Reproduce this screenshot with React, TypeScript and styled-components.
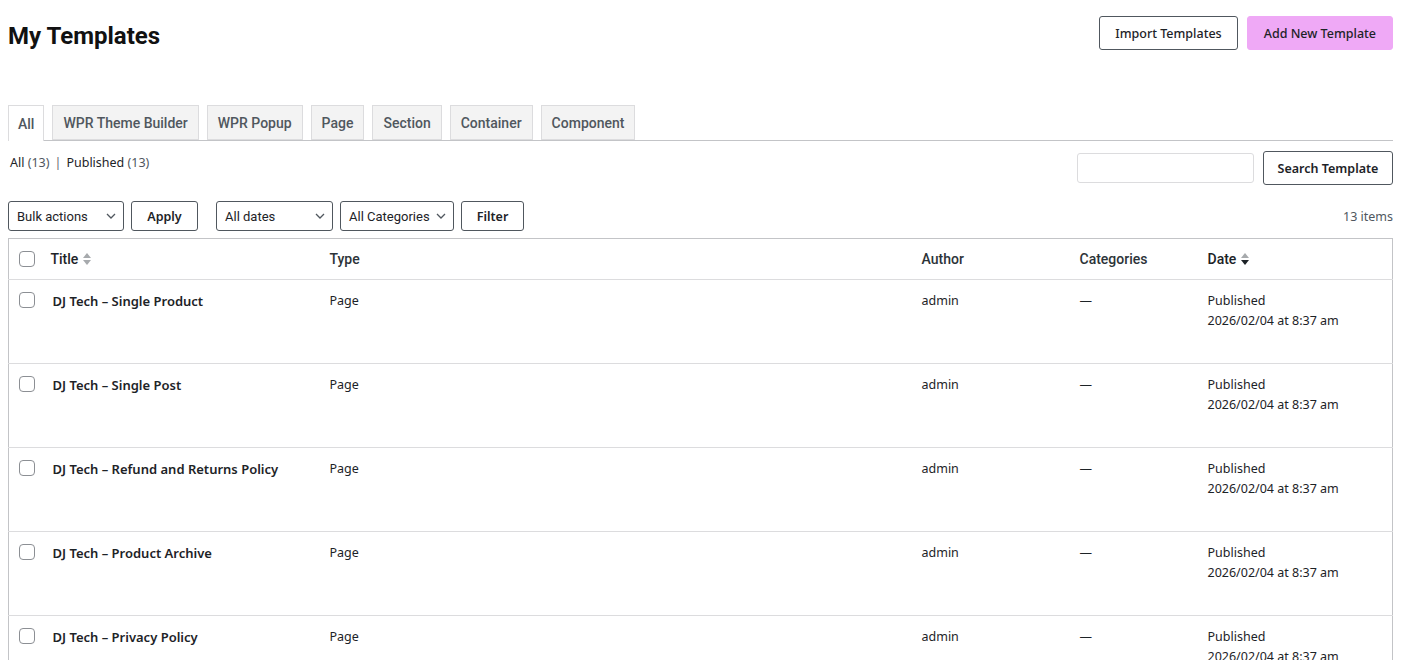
import React from "react";
import styled, { createGlobalStyle } from "styled-components";

const GlobalStyle = createGlobalStyle`
  body {
    margin: 0;
    background: #ffffff;
    font-family: "Noto Sans", "Open Sans", sans-serif;
    color: #1d2327;
  }
`;

const Page = styled.div`
  padding: 16px 17px 0 8px;
  width: 1410px;
  box-sizing: border-box;
`;

const Header = styled.div`
  display: flex;
  justify-content: space-between;
  align-items: flex-start;
  height: 89px;
`;

const Heading = styled.h1`
  margin: 6px 0 0;
  font-family: Roboto, sans-serif;
  font-weight: 700;
  font-size: 24px;
  color: #111;
`;

const HeaderActions = styled.div`
  display: flex;
  gap: 9px;
`;

const HeadButton = styled.button<{ $primary?: boolean }>`
  height: 34px;
  padding: 0 ${({ $primary }) => ($primary ? "16px" : "15px")};
  border-radius: 3px;
  border: 1px solid ${({ $primary }) => ($primary ? "#efa9f6" : "#50575e")};
  background: ${({ $primary }) => ($primary ? "#efa9f6" : "#fff")};
  font-family: "Noto Sans", sans-serif;
  font-size: 12.5px;
  font-weight: 500;
  color: #1d2327;
`;

const Tabs = styled.div`
  display: flex;
  gap: 8px;
  border-bottom: 1px solid #c3c4c7;
  height: 35px;
`;

const Tab = styled.div<{ $active?: boolean }>`
  display: flex;
  align-items: center;
  padding: 0 ${({ $active }) => ($active ? "9px" : "10px")};
  height: ${({ $active }) => ($active ? "36px" : "35px")};
  box-sizing: border-box;
  border: 1px solid #dcdcde;
  border-bottom: ${({ $active }) => ($active ? "none" : "1px solid #dcdcde")};
  background: ${({ $active }) => ($active ? "#fff" : "#f3f3f3")};
  font-family: Roboto, sans-serif;
  font-size: 14px;
  font-weight: 500;
  color: #50575e;
`;

const SubBar = styled.div`
  display: flex;
  justify-content: space-between;
  align-items: flex-start;
  margin-top: 10px;
`;

const Subsub = styled.div`
  font-size: 12.5px;
  color: #1d2327;
  padding: 3px 0 0 2px;
  span.count {
    color: #50575e;
  }
  span.sep {
    color: #646970;
    margin: 0 5px;
  }
`;

const SearchBox = styled.div`
  display: flex;
  gap: 9px;
  align-items: center;
`;

const SearchInput = styled.input`
  width: 177px;
  height: 30px;
  box-sizing: border-box;
  border: 1px solid #dcdcde;
  border-radius: 3px;
  background: #fff;
`;

const OutlineButton = styled.button<{ $w?: number; $h?: number }>`
  width: ${({ $w }) => ($w ? `${$w}px` : "auto")};
  height: ${({ $h }) => ($h ? `${$h}px` : "30px")};
  padding: 0 8px;
  border: 1px solid #50575e;
  border-radius: 3px;
  background: #fff;
  font-family: "Noto Sans", sans-serif;
  font-size: 12.5px;
  font-weight: 600;
  color: #1d2327;
`;

const FilterBar = styled.div`
  display: flex;
  align-items: center;
  margin-top: 16px;
  height: 30px;
`;

const Group = styled.div`
  display: flex;
  gap: 7px;
  margin-right: 18px;
`;

const Select = styled.div<{ $w: number }>`
  width: ${({ $w }) => $w}px;
  height: 30px;
  box-sizing: border-box;
  display: flex;
  align-items: center;
  justify-content: space-between;
  padding: 0 6px 0 8px;
  border: 1px solid #50575e;
  border-radius: 3px;
  font-family: Roboto, sans-serif;
  font-size: 13px;
  color: #1d2327;
`;

const ItemCount = styled.div`
  margin-left: auto;
  font-size: 12.5px;
  color: #50575e;
`;

const Table = styled.table`
  margin-top: 7px;
  width: 100%;
  border-collapse: collapse;
  border: 1px solid #c3c4c7;
  table-layout: fixed;
`;

const Th = styled.th<{ $w?: number; $dark?: boolean }>`
  width: ${({ $w }) => ($w ? `${$w}px` : "auto")};
  box-sizing: border-box;
  height: 41px;
  text-align: left;
  padding: 0 10px;
  font-family: Roboto, sans-serif;
  font-size: 14px;
  font-weight: 500;
  color: ${({ $dark }) => ($dark ? "#1d2327" : "#2c3338")};
  border-bottom: 1px solid #dcdcde;
`;

const Td = styled.td`
  vertical-align: top;
  height: 84px;
  box-sizing: border-box;
  padding: 11px 10px 0;
  font-size: 12.5px;
  line-height: 20px;
  color: #1d2327;
  border-bottom: 1px solid #dcdcde;
`;

const CheckCell = styled.td`
  vertical-align: top;
  padding: 12px 0 0 10px;
  border-bottom: 1px solid #dcdcde;
`;

const Check = styled.span`
  display: block;
  width: 14px;
  height: 14px;
  border: 1px solid #8c8f94;
  border-radius: 4px;
`;

const RowTitle = styled.strong`
  font-weight: 600;
  font-size: 13px;
  padding-left: 2px;
`;

const SortLabel = styled.span`
  display: inline-flex;
  align-items: center;
  gap: 4px;
`;

const Chevron = () => (
  <svg width="12" height="12" viewBox="0 0 12 12" fill="none">
    <path d="M2 4l4 4 4-4" stroke="#50575e" strokeWidth="1.3" />
  </svg>
);

const SortIcon = ({ active }: { active?: boolean }) => (
  <svg width="10" height="16" viewBox="0 0 10 16">
    <path d="M1 7l4-5 4 5z" fill="#a7aaad" />
    <path d="M1 9l4 5 4-5z" fill={active ? "#1d2327" : "#a7aaad"} />
  </svg>
);

const rows = [
  "DJ Tech – Single Product",
  "DJ Tech – Single Post",
  "DJ Tech – Refund and Returns Policy",
  "DJ Tech – Product Archive",
  "DJ Tech – Privacy Policy",
];

const tabs = ["All", "WPR Theme Builder", "WPR Popup", "Page", "Section", "Container", "Component"];

export default function App() {
  return (
    <>
      <GlobalStyle />
      <Page>
        <Header>
          <Heading>My Templates</Heading>
          <HeaderActions>
            <HeadButton>Import Templates</HeadButton>
            <HeadButton $primary>Add New Template</HeadButton>
          </HeaderActions>
        </Header>

        <Tabs>
          {tabs.map((t, i) => (
            <Tab key={t} $active={i === 0}>
              {t}
            </Tab>
          ))}
        </Tabs>

        <SubBar>
          <Subsub>
            All <span className="count">(13)</span>
            <span className="sep">|</span>
            Published <span className="count">(13)</span>
          </Subsub>
          <SearchBox>
            <SearchInput />
            <OutlineButton $h={34} $w={130}>Search Template</OutlineButton>
          </SearchBox>
        </SubBar>

        <FilterBar>
          <Group>
            <Select $w={116}>
              Bulk actions <Chevron />
            </Select>
            <OutlineButton $w={67}>Apply</OutlineButton>
          </Group>
          <Group>
            <Select $w={117}>
              All dates <Chevron />
            </Select>
            <Select $w={114}>
              All Categories <Chevron />
            </Select>
            <OutlineButton $w={63}>Filter</OutlineButton>
          </Group>
          <ItemCount>13 items</ItemCount>
        </FilterBar>

        <Table>
          <thead>
            <tr>
              <Th $w={32}>
                <Check />
              </Th>
              <Th $w={279} $dark>
                <SortLabel>
                  Title <SortIcon />
                </SortLabel>
              </Th>
              <Th $w={592}>Type</Th>
              <Th $w={158}>Author</Th>
              <Th $w={128}>Categories</Th>
              <Th $dark>
                <SortLabel>
                  Date <SortIcon active />
                </SortLabel>
              </Th>
            </tr>
          </thead>
          <tbody>
            {rows.map((r) => (
              <tr key={r}>
                <CheckCell>
                  <Check />
                </CheckCell>
                <Td>
                  <RowTitle>{r}</RowTitle>
                </Td>
                <Td>Page</Td>
                <Td>admin</Td>
                <Td>—</Td>
                <Td>
                  Published
                  <br />
                  2026/02/04 at 8:37 am
                </Td>
              </tr>
            ))}
          </tbody>
        </Table>
      </Page>
    </>
  );
}
